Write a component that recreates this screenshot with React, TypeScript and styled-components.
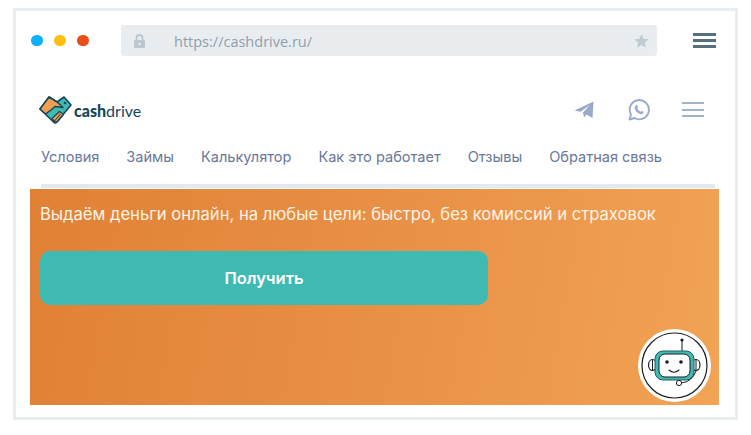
import styled, { createGlobalStyle } from "styled-components";

const GlobalStyle = createGlobalStyle`
  html, body {
    margin: 0;
    padding: 0;
    background: #fff;
  }
  body {
    font-family: "Inter", "Noto Sans", sans-serif;
  }
`;

const Page = styled.div`
  width: 751px;
  height: 435px;
  padding: 8px 13px 15px;
  box-sizing: border-box;
`;

const Frame = styled.div`
  position: relative;
  width: 725px;
  height: 412px;
  box-sizing: border-box;
  border: 3px solid #e9edf0;
  background: #fff;
  display: flex;
  flex-direction: column;
`;

const BrowserBar = styled.div`
  display: flex;
  align-items: center;
  height: 31px;
  margin-top: 14px;
  padding: 0 19px 0 15px;
`;

const Dots = styled.div`
  display: flex;
  gap: 11.5px;
  width: 90px;
  flex: none;
`;

const Dot = styled.span<{ $color: string }>`
  width: 11.5px;
  height: 11.5px;
  border-radius: 50%;
  background: ${(p) => p.$color};
`;

const Address = styled.div`
  width: 536px;
  height: 31px;
  flex: none;
  box-sizing: border-box;
  border-radius: 3px;
  background: #e9edf0;
  display: flex;
  align-items: center;
  padding: 0 8px 0 12px;
`;

const Url = styled.span`
  margin: 1px 0 0 28px;
  flex: 1;
  font-family: "Open Sans", sans-serif;
  font-size: 14.5px;
  color: #8f9fad;
`;

const BarMenu = styled.div<{ $color: string; $width: number; $line: number }>`
  display: flex;
  flex-direction: column;
  justify-content: space-between;
  width: ${(p) => p.$width}px;
  height: 15px;
  margin-left: auto;

  i {
    display: block;
    height: ${(p) => p.$line}px;
    background: ${(p) => p.$color};
  }
`;

const SiteHeader = styled.div`
  display: flex;
  align-items: center;
  height: 30px;
  margin-top: 38px;
  padding: 0 31px 0 23px;
`;

const Logo = styled.div`
  display: flex;
  align-items: center;
  gap: 2px;

  svg {
    margin-top: 2px;
  }
`;

const LogoText = styled.span`
  font-family: "Lato", sans-serif;
  font-size: 16px;
  color: #15475a;
  margin-top: 2px;

  b {
    font-weight: 900;
  }
`;

const Socials = styled.div`
  display: flex;
  align-items: center;
  margin-left: auto;
  gap: 32px;
  margin-top: 1px;

  svg:first-child {
    margin-right: 2px;
  }
`;

const Nav = styled.nav`
  display: flex;
  gap: 27px;
  margin-top: 23px;
  padding-left: 25px;
  height: 20px;
  align-items: center;
`;

const NavLink = styled.a`
  font-size: 14.55px;
  color: #69789b;
  white-space: nowrap;
`;

const Divider = styled.div`
  height: 4px;
  margin: 17px 20px 0 25px;
  background: #e4e8ef;
`;

const Hero = styled.section`
  margin: 1px 16px 0 14px;
  height: 216px;
  flex: none;
  box-sizing: border-box;
  padding: 14px 10px;
  background: linear-gradient(100deg, #e08135 0%, #e89046 50%, #f2a354 100%);
`;

const HeroText = styled.p`
  margin: 0;
  font-size: 16.63px;
  line-height: 22px;
  color: #fff3e6;
  white-space: nowrap;
`;

const GetButton = styled.button`
  display: block;
  width: 448px;
  height: 54px;
  margin-top: 26px;
  border: none;
  border-radius: 10px;
  background: #3fbab3;
  color: #fff;
  font-family: inherit;
  font-size: 16.5px;
  font-weight: 600;
`;

const ChatBadge = styled.div`
  position: absolute;
  right: 24px;
  bottom: 15px;
  width: 73px;
  height: 73px;
`;

const HandshakeLogo = () => (
  <svg width="33" height="28" viewBox="0 0 33 28">
    <path d="M1 13 L10 1 L18 6 L25 1 L32 9 L17.5 26.5 Q16.5 27.5 15 26.5 Z" fill="#3fbab3" stroke="#15475a" strokeWidth="1.6" strokeLinejoin="round" />
    <path d="M1 13 L10 1 L18 6 L24 11.5 L16 10.5 L12 14 L6.5 18 Z" fill="#f2a04f" stroke="#15475a" strokeWidth="1.5" strokeLinejoin="round" />
    <path d="M13 22.5 L20.5 15.5 L24.5 18.5 L18.5 25.5 L16 26 Z" fill="#f2a04f" stroke="#15475a" strokeWidth="1.2" strokeLinejoin="round" />
    <path d="M15.5 25 L21.5 18 M18.5 25 L23 19.8" stroke="#15475a" strokeWidth="1.1" fill="none" />
    <circle cx="26" cy="7" r="1.3" fill="#15475a" />
  </svg>
);

const LockIcon = () => (
  <svg width="13" height="14" viewBox="0 0 13 14">
    <path d="M3.5 6V4a3 3 0 0 1 6 0v2" fill="none" stroke="#bcc7cf" strokeWidth="1.8" />
    <rect x="1" y="6" width="11" height="8" rx="1" fill="#bcc7cf" />
    <circle cx="6.5" cy="10" r="1.2" fill="#e9edf0" />
  </svg>
);

const StarIcon = () => (
  <svg width="15" height="14" viewBox="0 0 24 23">
    <path d="M12 0l3.4 8 8.6.7-6.5 5.6 2 8.4L12 18.2 4.5 22.7l2-8.4L0 8.7 8.6 8z" fill="#c0ccd4" />
  </svg>
);

const TelegramIcon = () => (
  <svg width="20" height="17" viewBox="0 0 20 17">
    <path d="M0.5 9.5 L19.5 0.5 L18.5 17 L12.5 13.5 L10 16.5 L9 11.5 L15.5 4.5 L6.5 10.8 Z" fill="#98abc8" />
  </svg>
);

const WhatsappIcon = () => (
  <svg width="22" height="22" viewBox="0 0 22 22">
    <path d="M1.5 20.5 L3 15.5 A9.6 9.6 0 1 1 6.5 19 Z" fill="none" stroke="#98abc8" strokeWidth="1.9" strokeLinejoin="round" />
    <path d="M7.5 6.5 Q8.8 5.6 9.4 6.6 L10 8 Q10 8.8 9.2 9.5 Q10.2 11.8 12.6 12.8 Q13.4 12 14 12 L15.4 12.8 Q16 13.6 15 14.6 Q13.6 15.8 11 14.6 Q7.8 13 6.8 10 Q6.2 8 7.5 6.5 Z" fill="#98abc8" />
  </svg>
);

const RobotIcon = () => (
  <svg width="73" height="73" viewBox="0 0 73 73">
    <circle cx="36.5" cy="36.5" r="36.5" fill="#fff" />
    <circle cx="36.5" cy="36.5" r="32.5" fill="#fff" stroke="#1d1d1d" strokeWidth="1.2" />
    <path d="M44 11 V22" stroke="#1d1d1d" strokeWidth="1" />
    <circle cx="44" cy="11" r="1.6" fill="#1d1d1d" />
    <ellipse cx="14.5" cy="36" rx="4" ry="5.5" fill="#fff" stroke="#1d1d1d" strokeWidth="1.2" />
    <path d="M14.5 30.5 V41.5" stroke="#1d1d1d" strokeWidth="1" />
    <ellipse cx="58" cy="36" rx="4" ry="5.5" fill="#fff" stroke="#1d1d1d" strokeWidth="1.2" />
    <path d="M58 30.5 V41.5" stroke="#1d1d1d" strokeWidth="1" />
    <rect x="17" y="22" width="39" height="29" rx="8" fill="#3fbab3" stroke="#1d5f60" strokeWidth="1" />
    <rect x="21" y="25" width="31" height="23" rx="6" fill="#fff" stroke="#1d1d1d" strokeWidth="1" />
    <circle cx="29" cy="33" r="1.8" fill="#1d1d1d" />
    <circle cx="43" cy="33" r="1.8" fill="#1d1d1d" />
    <path d="M31 41 Q36 45.5 41 41" fill="none" stroke="#1d1d1d" strokeWidth="1.1" strokeLinecap="round" />
    <path d="M43 54 Q54 53 58 42" fill="none" stroke="#1d1d1d" strokeWidth="1" />
    <circle cx="41" cy="54" r="2.6" fill="#fff" stroke="#1d1d1d" strokeWidth="1" />
  </svg>
);

const navItems = ["Условия", "Займы", "Калькулятор", "Как это работает", "Отзывы", "Обратная связь"];

export default function App() {
  return (
    <>
      <GlobalStyle />
      <Page>
        <Frame>
          <BrowserBar>
            <Dots>
              <Dot $color="#0cb0fb" />
              <Dot $color="#fdc010" />
              <Dot $color="#e94e1b" />
            </Dots>
            <Address>
              <LockIcon />
              <Url>https://cashdrive.ru/</Url>
              <StarIcon />
            </Address>
            <BarMenu $color="#56707f" $width={23} $line={3}>
              <i />
              <i />
              <i />
            </BarMenu>
          </BrowserBar>
          <SiteHeader>
            <Logo>
              <HandshakeLogo />
              <LogoText>
                <b>cash</b>drive
              </LogoText>
            </Logo>
            <Socials>
              <TelegramIcon />
              <WhatsappIcon />
              <BarMenu $color="#a3b3cd" $width={22} $line={2}>
                <i />
                <i />
                <i />
              </BarMenu>
            </Socials>
          </SiteHeader>
          <Nav>
            {navItems.map((item) => (
              <NavLink key={item}>{item}</NavLink>
            ))}
          </Nav>
          <Divider />
          <Hero>
            <HeroText>Выдаём деньги онлайн, на любые цели: быстро, без комиссий и страховок</HeroText>
            <GetButton>Получить</GetButton>
          </Hero>
          <ChatBadge>
            <RobotIcon />
          </ChatBadge>
        </Frame>
      </Page>
    </>
  );
}
